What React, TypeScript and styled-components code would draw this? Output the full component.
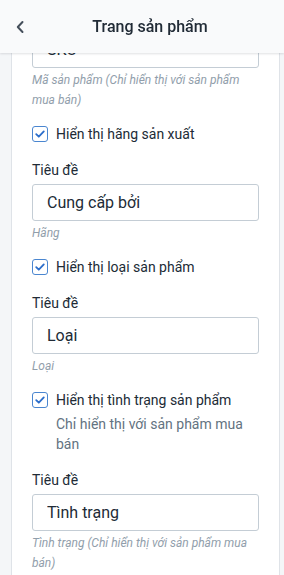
import React from "react";
import styled, { createGlobalStyle } from "styled-components";

const GlobalStyle = createGlobalStyle`
  html, body { margin: 0; padding: 0; }
  body {
    background: #f4f6f8;
    font-family: Roboto, "Liberation Sans", sans-serif;
    color: #212b36;
    overflow: hidden;
  }
  * { box-sizing: border-box; }
`;

const Page = styled.div`
  height: 100vh;
  overflow: hidden;
`;

const Header = styled.header`
  position: fixed;
  top: 0;
  left: 0;
  right: 0;
  height: 53px;
  display: flex;
  align-items: center;
  padding: 0 12px;
  background: #f9fafb;
  box-shadow: 0 1px 2px rgba(33, 43, 54, 0.14);
  z-index: 10;
`;

const BackButton = styled.button`
  width: 16px;
  height: 24px;
  padding: 0;
  border: 0;
  background: transparent;
  display: flex;
  align-items: center;
  justify-content: center;
  color: #454f5b;
  cursor: pointer;
`;

const Title = styled.h1`
  flex: 1;
  margin: 0;
  text-align: center;
  font-size: 16px;
  font-weight: 500;
  line-height: 20px;
  color: #212b36;
`;

const Card = styled.main`
  margin: -10px 4px 0 11px;
  background: #fff;
  border: 1px solid #dfe3e8;
  padding: 16px 20px 24px;
  display: flex;
  flex-direction: column;
  gap: 14px;
`;

const Section = styled.section`
  display: flex;
  flex-direction: column;
`;

const CheckRow = styled.label`
  display: flex;
  align-items: center;
  gap: 8px;
  font-size: 14px;
  line-height: 20px;
  color: #212b36;
`;

const Box = styled.span`
  width: 16px;
  height: 16px;
  flex: none;
  border: 1px solid #4a86d0;
  border-radius: 3px;
  background: #fff;
  display: flex;
  align-items: center;
  justify-content: center;
  color: #2c6ecb;
`;

const Description = styled.div`
  margin-top: 4px;
  padding-left: 24px;
  font-size: 14px;
  line-height: 20px;
  color: #637381;
`;

const Field = styled.div<{ $spaced?: boolean }>`
  display: flex;
  flex-direction: column;
  margin-top: ${(p) => (p.$spaced ? "16px" : "0")};
`;

const Label = styled.div`
  font-size: 14px;
  line-height: 20px;
  color: #212b36;
`;

const Input = styled.input`
  margin-top: 4px;
  height: 37px;
  width: 100%;
  border: 1px solid #c4cdd5;
  border-radius: 3px;
  padding: 0 14px;
  font-family: Roboto, "Liberation Sans", sans-serif;
  font-size: 16px;
  color: #212b36;
  background: #fff;
  outline: none;
`;

const Help = styled.div`
  margin-top: 2px;
  font-size: 12px;
  line-height: 20px;
  font-style: italic;
  color: #919eab;
`;

const Check = () => (
  <svg width="12" height="12" viewBox="0 0 12 12" fill="none">
    <path d="M2.2 6.2 4.8 8.7 9.8 3.4" stroke="currentColor" strokeWidth="1.8" strokeLinecap="round" strokeLinejoin="round" />
  </svg>
);

type FieldData = { value: string; help: string };
type SectionData = { check: string; desc?: string; field: FieldData };

const sections: SectionData[] = [
  { check: "Hiển thị hãng sản xuất", field: { value: "Cung cấp bởi", help: "Hãng" } },
  { check: "Hiển thị loại sản phẩm", field: { value: "Loại", help: "Loại" } },
  {
    check: "Hiển thị tình trạng sản phẩm",
    desc: "Chỉ hiển thị với sản phẩm mua bán",
    field: { value: "Tình trạng", help: "Tình trạng (Chỉ hiển thị với sản phẩm mua bán)" },
  },
];

const TitleField = ({ data, spaced }: { data: FieldData; spaced?: boolean }) => (
  <Field $spaced={spaced}>
    <Label>Tiêu đề</Label>
    <Input defaultValue={data.value} readOnly />
    <Help>{data.help}</Help>
  </Field>
);

export default function App() {
  return (
    <Page>
      <GlobalStyle />
      <Header>
        <BackButton aria-label="Quay lại">
          <svg width="10" height="14" viewBox="0 0 10 14" fill="none">
            <path d="M7.5 2 2.8 7l4.7 5" stroke="currentColor" strokeWidth="2" strokeLinecap="round" strokeLinejoin="round" />
          </svg>
        </BackButton>
        <Title>Trang sản phẩm</Title>
      </Header>
      <Card>
        <Section>
          <TitleField data={{ value: "SKU", help: "Mã sản phẩm (Chỉ hiển thị với sản phẩm mua bán)" }} />
        </Section>
        {sections.map((s) => (
          <Section key={s.check}>
            <CheckRow>
              <Box>
                <Check />
              </Box>
              {s.check}
            </CheckRow>
            {s.desc && <Description>{s.desc}</Description>}
            <TitleField data={s.field} spaced />
          </Section>
        ))}
      </Card>
    </Page>
  );
}
